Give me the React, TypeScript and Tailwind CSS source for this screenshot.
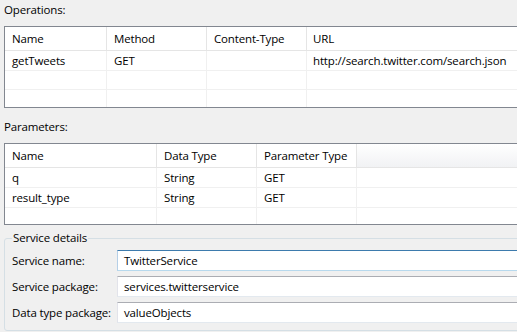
const opsCols = ['w-[102px]', 'w-[100px]', 'w-[100px]'];
const paramCols = ['w-[152px]', 'w-[100px]', 'w-[100px]'];

type TableProps = {
  cols: string[];
  header: string[];
  rows: string[][];
  rowHeights: string[];
  fillerHeight: string;
  headerFiller?: boolean;
};

function Grid({ cols, header, rows, rowHeights, fillerHeight, headerFiller }: TableProps) {
  return (
    <div className="ml-[4px] w-[580px] border border-[#828790] bg-white">
      <div className="flex h-[24px] border-b border-[#e5e5e5]">
        {cols.map((c, i) => (
          <div key={i} className={`${c} shrink-0 border-r border-[#e5e5e5] pl-[7px] flex items-center`}>
            {header[i]}
          </div>
        ))}
        {headerFiller ? (
          <div className="flex-1 bg-gradient-to-b from-white to-[#f1f2f4]" />
        ) : (
          <div className="flex-1 pl-[6px] flex items-center">{header[cols.length]}</div>
        )}
      </div>
      {rows.map((r, ri) => (
        <div key={ri} className={`flex ${rowHeights[ri]} border-b border-[#f0f0f0]`}>
          {cols.map((c, i) => (
            <div key={i} className={`${c} shrink-0 border-r border-[#f0f0f0] pl-[7px] flex items-center`}>
              {r[i]}
            </div>
          ))}
          <div className="flex-1 pl-[6px] flex items-center">{r[cols.length]}</div>
        </div>
      ))}
      <div className={`flex ${fillerHeight}`}>
        {cols.map((c, i) => (
          <div key={i} className={`${c} shrink-0 border-r border-[#f0f0f0]`} />
        ))}
        <div className="flex-1" />
      </div>
    </div>
  );
}

function Field({ label, value, focused }: { label: string; value: string; focused?: boolean }) {
  return (
    <div className="flex h-[21px] items-center">
      <div className="w-[105px] shrink-0 whitespace-nowrap">{label}</div>
      <div
        className={
          focused
            ? 'flex-1 h-[21px] pl-[6px] flex items-center bg-white border border-t-[#3d7bad] border-x-[#b5cfe7] border-b-[#b7d9ed]'
            : 'flex-1 h-[21px] pl-[6px] flex items-center bg-white border border-t-[#abadb3] border-x-[#e2e3ea] border-b-[#e3e9ef]'
        }
      >
        {value}
      </div>
    </div>
  );
}

export default function App() {
  return (
    <div className="w-[517px] h-[332px] overflow-hidden whitespace-nowrap bg-[#f0f0f0] text-[11.5px] tracking-[-0.15px] leading-[16px] text-black font-['Segoe_UI','Open_Sans',sans-serif]">
      <div className="h-[26px] pt-[2px] pl-[4px]">Operations:</div>
      <Grid
        cols={opsCols}
        header={['Name', 'Method', 'Content-Type', 'URL']}
        rows={[
          ['getTweets', 'GET', '', 'http://search.twitter.com/search.json'],
          ['', '', '', ''],
        ]}
        rowHeights={['h-[20px]', 'h-[19px]']}
        fillerHeight="h-[17px]"
      />
      <div className="h-[35px] pt-[11px] pl-[4px]">Parameters:</div>
      <Grid
        cols={paramCols}
        header={['Name', 'Data Type', 'Parameter Type']}
        rows={[
          ['q', 'String', 'GET', ''],
          ['result_type', 'String', 'GET', ''],
        ]}
        rowHeights={['h-[20px]', 'h-[20px]']}
        fillerHeight="h-[16px]"
        headerFiller
      />
      <fieldset className="mt-[5px] ml-[4px] w-[580px] border border-[#d5dfe5] rounded-[3px] pl-[7px] pt-[4px] pb-[7px]">
        <legend className="px-[1px]">Service details</legend>
        <div className="flex flex-col gap-[5px]">
          <Field label="Service name:" value="TwitterService" focused />
          <Field label="Service package:" value="services.twitterservice" />
          <Field label="Data type package:" value="valueObjects" />
        </div>
      </fieldset>
    </div>
  );
}
